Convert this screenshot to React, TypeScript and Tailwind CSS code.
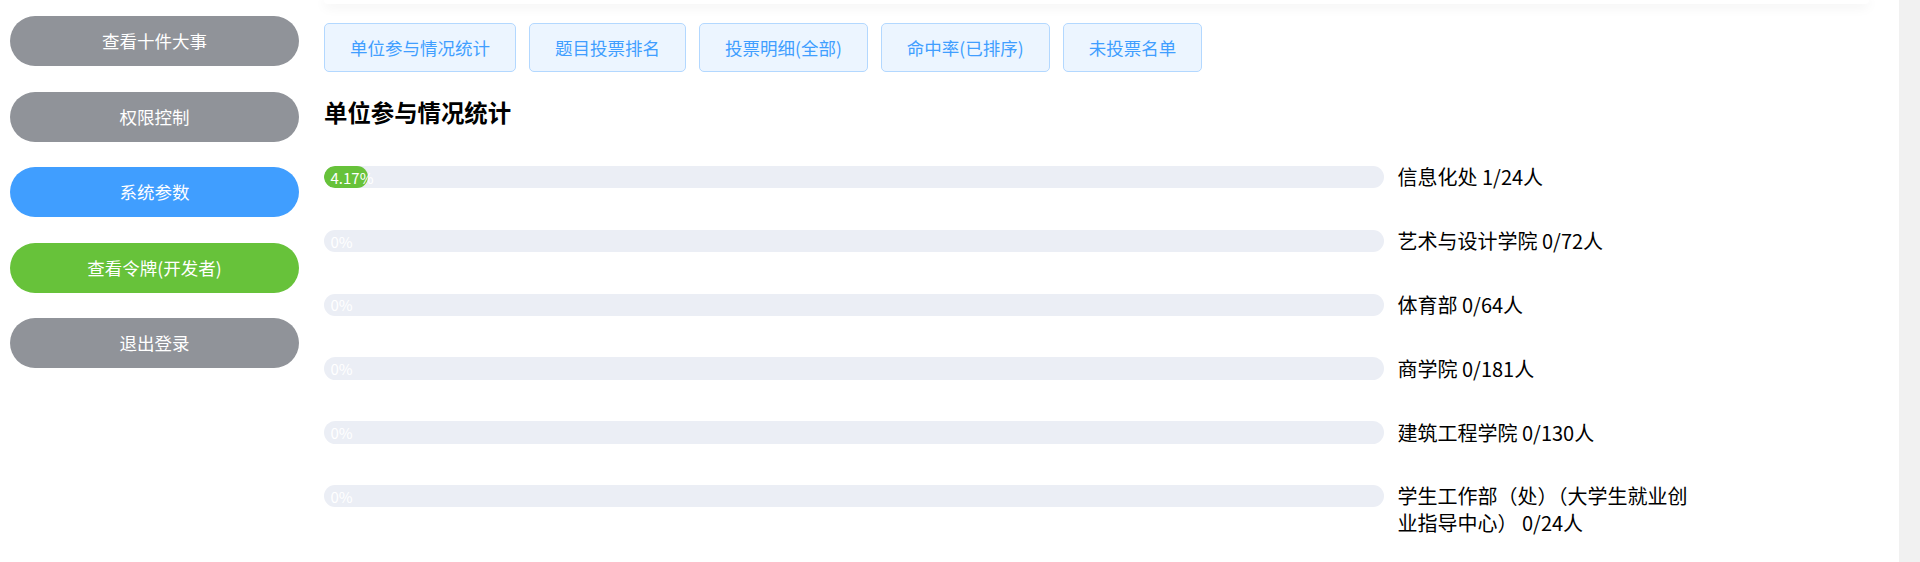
import React from "react";

const font = { fontFamily: '"Noto Sans CJK SC", "Noto Sans", sans-serif' };

const sideButtons = [
  { label: "查看十件大事", cls: "bg-[#909399]" },
  { label: "权限控制", cls: "bg-[#909399]" },
  { label: "系统参数", cls: "bg-[#409eff]" },
  { label: "查看令牌(开发者)", cls: "bg-[#67c23a]" },
  { label: "退出登录", cls: "bg-[#909399]" },
];

const tabs = ["单位参与情况统计", "题目投票排名", "投票明细(全部)", "命中率(已排序)", "未投票名单"];

const rows = [
  { pct: 4.17, label: "信息化处 1/24人" },
  { pct: 0, label: "艺术与设计学院 0/72人" },
  { pct: 0, label: "体育部 0/64人" },
  { pct: 0, label: "商学院 0/181人" },
  { pct: 0, label: "建筑工程学院 0/130人" },
  { pct: 0, label: "学生工作部（处）（大学生就业创业指导中心） 0/24人" },
];

export default function App() {
  return (
    <div className="flex h-[562px] w-[1920px] overflow-hidden bg-white" style={font}>
      <div className="flex w-[1899px] shrink-0 items-start">
        {/* Sidebar */}
        <div className="flex w-[324px] shrink-0 flex-col gap-[25.5px] pl-[10px] pt-[16px]">
          {sideButtons.map((b) => (
            <div
              key={b.label}
              className={`flex h-[50px] w-[289px] shrink-0 items-center justify-center rounded-full text-[17.5px] leading-none text-white ${b.cls}`}
            >
              {b.label}
            </div>
          ))}
        </div>
        {/* Content */}
        <div className="flex-1">
          <div className="h-[4px] w-[1545px] rounded-b-[5px] bg-white shadow-[0_2px_12px_0_rgba(0,0,0,0.1)]" />
          <div className="mt-[19.3px] flex gap-[13px]">
            {tabs.map((t) => (
              <div
                key={t}
                className="flex h-[49px] items-center rounded-[5px] border border-[#b3d8ff] bg-[#ecf5ff] px-[25px] text-[17.5px] leading-none text-[#409eff]"
              >
                {t}
              </div>
            ))}
          </div>
          <h3 className="mt-[27.7px] text-[23.4px] font-bold leading-[24px] text-black">单位参与情况统计</h3>
          <div className="mt-[40.5px]">
            {rows.map((r, i) => (
              <div key={i} className="mb-[37.1px] flex items-start">
                <div className="mt-[1.5px] flex h-[22.5px] w-[1059.5px] shrink-0 items-center overflow-hidden rounded-full bg-[#ebeef5]">
                  <div
                    className="flex h-full items-center rounded-full bg-[#67c23a]"
                    style={{ width: `${r.pct}%` }}
                  >
                    <span className="ml-[6.5px] whitespace-nowrap text-[15px] leading-none text-white">
                      {r.pct}%
                    </span>
                  </div>
                </div>
                <div className="ml-[14px] w-[300px] text-[20px] leading-[26.7px] text-black">{r.label}</div>
              </div>
            ))}
          </div>
        </div>
      </div>
      <div className="w-[21px] shrink-0 bg-[#f1f1f1]" />
    </div>
  );
}
